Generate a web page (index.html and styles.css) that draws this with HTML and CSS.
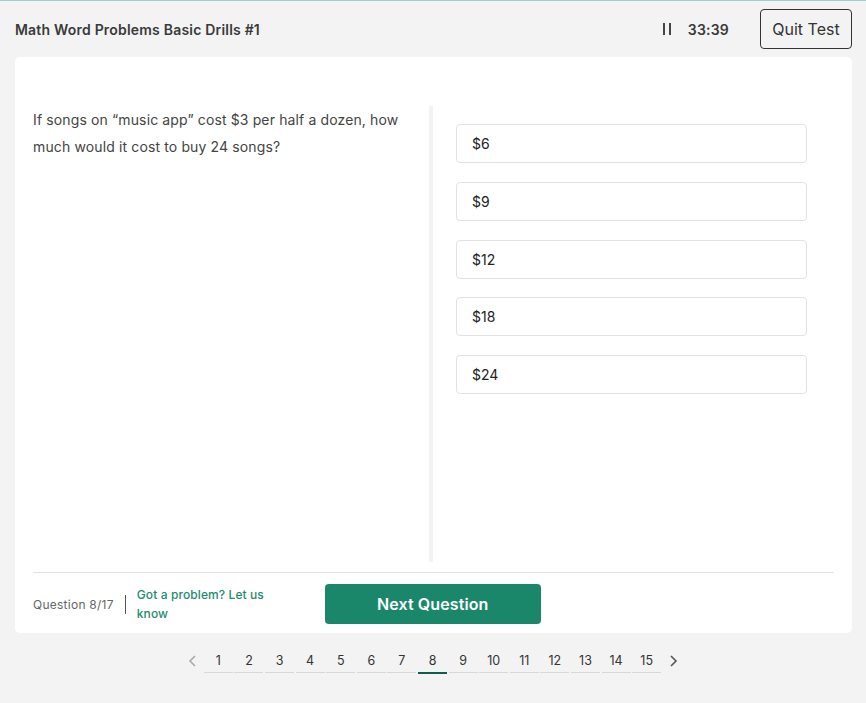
FILE: index.html
```html
<!DOCTYPE html>
<html lang="en">
<head>
<meta charset="utf-8">
<title>Math Word Problems Basic Drills #1</title>
<link rel="stylesheet" href="styles.css">
</head>
<body>
<header class="topbar">
  <h1 class="title">Math Word Problems Basic Drills #1</h1>
  <div class="controls">
    <svg class="pause" width="10" height="14" viewBox="0 0 10 14" aria-hidden="true">
      <rect x="1" y="1" width="2" height="12" fill="#444"/>
      <rect x="7" y="1" width="2" height="12" fill="#444"/>
    </svg>
    <span class="timer">33:39</span>
    <button class="quit">Quit Test</button>
  </div>
</header>

<main class="card">
  <section class="content">
    <div class="question">
      <p>If songs on “music app” cost $3 per half a dozen, how much would it cost to buy 24 songs?</p>
    </div>
    <div class="divider"></div>
    <div class="answers">
      <div class="option">$6</div>
      <div class="option">$9</div>
      <div class="option">$12</div>
      <div class="option">$18</div>
      <div class="option">$24</div>
    </div>
  </section>
  <footer class="card-footer">
    <span class="count">Question 8/17</span>
    <span class="sep"></span>
    <a class="report" href="#">Got a problem? Let us know</a>
    <button class="next">Next Question</button>
  </footer>
</main>

<nav class="pager">
  <svg class="chev" width="10" height="14" viewBox="0 0 10 14" aria-hidden="true"><polyline points="7,2 2,7 7,12" fill="none" stroke="#aaa" stroke-width="1.6"/></svg>
  <ul class="pages">
    <li>1</li><li>2</li><li>3</li><li>4</li><li>5</li><li>6</li><li>7</li>
    <li class="active">8</li><li>9</li><li>10</li><li>11</li><li>12</li><li>13</li><li>14</li><li>15</li>
  </ul>
  <svg class="chev" width="10" height="14" viewBox="0 0 10 14" aria-hidden="true"><polyline points="3,2 8,7 3,12" fill="none" stroke="#555" stroke-width="1.6"/></svg>
</nav>
</body>
</html>
```

FILE: styles.css
```css
* { box-sizing: border-box; }
html, body { margin: 0; padding: 0; }
body {
  background: #f3f3f3;
  border-top: 1px solid #9fcfd4;
  font-family: Inter, "Noto Sans", sans-serif;
  color: #333;
  height: 703px;
  overflow: hidden;
}
.topbar {
  height: 56px;
  display: flex;
  align-items: center;
  justify-content: space-between;
  padding: 0 14px 0 15px;
}
.title {
  margin: 0;
  font-size: 14px;
  font-weight: 600;
  letter-spacing: 0.2px;
  color: #3a3a3a;
}
.controls {
  display: flex;
  align-items: center;
}
.pause { display: block; margin-right: 16px; margin-top: 0; }
.timer {
  font-size: 14px;
  font-weight: 600;
  letter-spacing: 0.2px;
  color: #3a3a3a;
  margin-right: 31px;
}
.quit {
  font-family: inherit;
  font-size: 16px;
  color: #333;
  background: transparent;
  border: 1px solid #333;
  border-radius: 4px;
  height: 40px;
  width: 92px;
  padding: 0;
}
.card {
  margin: 0 14px 0 15px;
  height: 576px;
  background: #fff;
  border-radius: 5px;
  padding: 49px 18px 0 18px;
  display: flex;
  flex-direction: column;
}
.content {
  display: flex;
  height: 456px;
}
.question {
  width: 396px;
  padding-right: 12px;
}
.question p {
  margin: 0;
  font-size: 14px;
  line-height: 27px;
  letter-spacing: 0.13px;
  color: #444;
}
.divider {
  width: 4px;
  background: #f3f3f3;
}
.answers {
  padding: 18px 0 0 23px;
  display: flex;
  flex-direction: column;
  gap: 18.75px;
}
.option {
  width: 351px;
  height: 39px;
  border: 1px solid #e2e2e2;
  border-radius: 4px;
  padding-left: 15px;
  display: flex;
  align-items: center;
  font-size: 14px;
  color: #222;
}
.card-footer {
  margin-top: 10px;
  border-top: 1px solid #e3e3e3;
  padding-top: 11px;
  display: flex;
  align-items: center;
}
.count {
  font-size: 12px;
  letter-spacing: 0.25px;
  color: #666;
}
.sep {
  width: 1px;
  height: 19px;
  background: #555;
  margin: 0 11px;
}
.report {
  width: 140px;
  font-size: 12px;
  line-height: 19px;
  letter-spacing: 0.1px;
  color: #1e8a70;
  text-decoration: none;
  font-weight: 500;
}
.next {
  margin-left: 48px;
  width: 216px;
  height: 40px;
  border: none;
  border-radius: 4px;
  background: #1a876b;
  color: #fff;
  font-family: inherit;
  font-size: 16px;
  font-weight: 600;
  letter-spacing: 0.1px;
}
.pager {
  display: flex;
  justify-content: center;
  align-items: flex-start;
  margin-top: 13px;
}
.chev { display: block; margin-top: 8px; }
.chev:first-child { margin-right: 6px; }
.chev:last-child { margin-left: 7px; }
.pages {
  list-style: none;
  margin: 0;
  padding: 0;
  display: flex;
  align-items: flex-start;
  gap: 1.6px;
}
.pages li {
  width: 29px;
  height: 27px;
  padding-top: 4px;
  text-align: center;
  font-size: 12.5px;
  line-height: 22px;
  color: #333;
  border-bottom: 1px solid #d8d8d8;
}
.pages li.active {
  border-bottom: 2px solid #0f5e4c;
  height: 28px;
}
```
